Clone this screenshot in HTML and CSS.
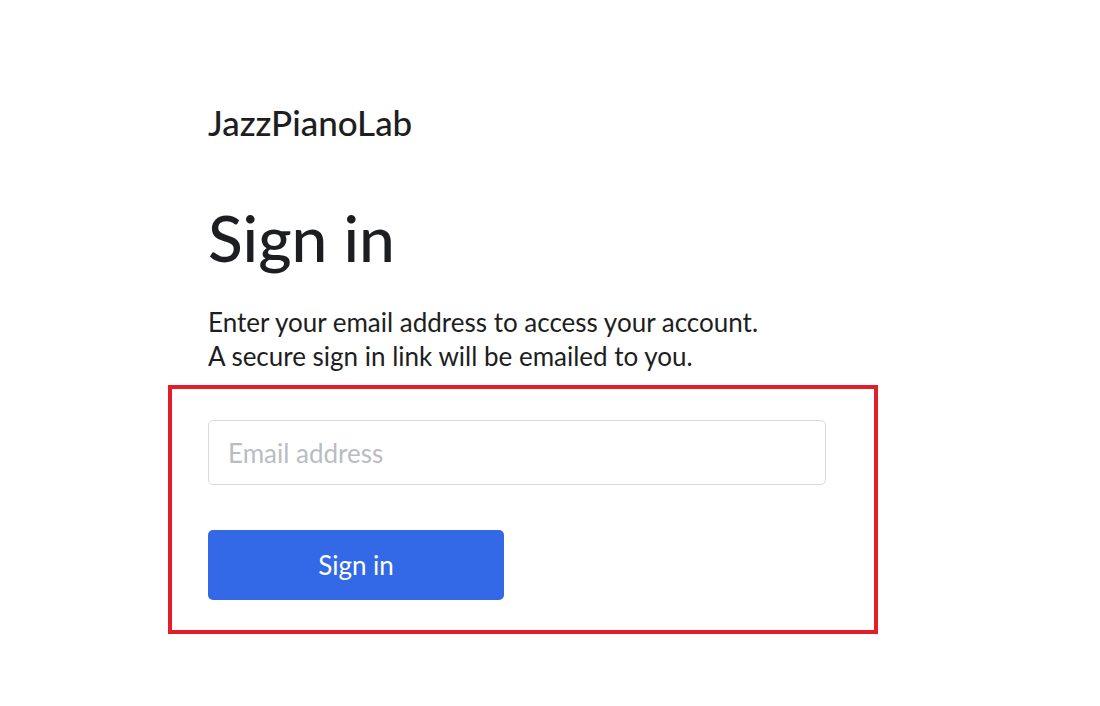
FILE: index.html
```html
<!DOCTYPE html>
<html lang="en">
<head>
<meta charset="utf-8">
<title>Sign in - JazzPianoLab</title>
<link rel="stylesheet" href="styles.css">
</head>
<body>
<main class="page">
  <div class="brand">JazzPianoLab</div>
  <h1 class="title">Sign in</h1>
  <p class="intro">Enter your email address to access your account.<br>A secure sign in link will be emailed to you.</p>
  <form class="form-box">
    <input class="email" type="email" placeholder="Email address">
    <button class="submit" type="button">Sign in</button>
  </form>
</main>
</body>
</html>
```
FILE: styles.css
```css
html, body {
  margin: 0;
  padding: 0;
  background: #ffffff;
}
body {
  font-family: Lato, "Liberation Sans", sans-serif;
  color: #1c1e21;
}
.page {
  padding: 98px 0 0 208px;
  display: flex;
  flex-direction: column;
  align-items: flex-start;
}
.brand {
  font-size: 35px;
  line-height: 48px;
  font-weight: 500;
}
.title {
  margin: 54px 0 0 0;
  font-size: 64px;
  line-height: 76px;
  font-weight: 500;
}
.intro {
  margin: 29px 0 0 0;
  font-size: 26px;
  line-height: 34px;
}
.form-box {
  margin: 12px 0 0 -40px;
  width: 710px;
  box-sizing: border-box;
  border: 4px solid #e31e2a;
  padding: 31px 0 30px 36px;
  display: flex;
  flex-direction: column;
  align-items: flex-start;
  gap: 45px;
}
.email {
  width: 618px;
  height: 65px;
  box-sizing: border-box;
  border: 1px solid #d9dbdd;
  border-radius: 5px;
  padding: 0 19px;
  font-family: inherit;
  font-size: 26px;
  color: #1c1e21;
  outline: none;
}
.email::placeholder {
  color: #b9bdc3;
}
.submit {
  width: 296px;
  height: 70px;
  border: none;
  border-radius: 5px;
  background: #3369e7;
  color: #ffffff;
  font-family: inherit;
  font-size: 26px;
  cursor: pointer;
}
```
